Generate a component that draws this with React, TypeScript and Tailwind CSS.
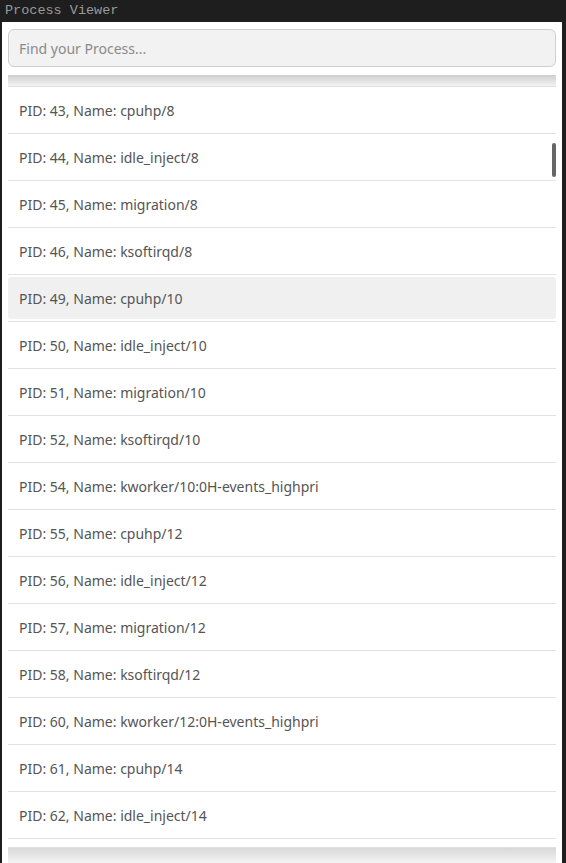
const processes = [
  { pid: 43, name: "cpuhp/8" },
  { pid: 44, name: "idle_inject/8" },
  { pid: 45, name: "migration/8" },
  { pid: 46, name: "ksoftirqd/8" },
  { pid: 49, name: "cpuhp/10" },
  { pid: 50, name: "idle_inject/10" },
  { pid: 51, name: "migration/10" },
  { pid: 52, name: "ksoftirqd/10" },
  { pid: 54, name: "kworker/10:0H-events_highpri" },
  { pid: 55, name: "cpuhp/12" },
  { pid: 56, name: "idle_inject/12" },
  { pid: 57, name: "migration/12" },
  { pid: 58, name: "ksoftirqd/12" },
  { pid: 60, name: "kworker/12:0H-events_highpri" },
  { pid: 61, name: "cpuhp/14" },
  { pid: 62, name: "idle_inject/14" },
];

export default function App() {
  return (
    <div className="h-[863px] w-[566px] overflow-hidden bg-[#1e1e1e] flex flex-col">
      {/* title bar */}
      <div className="h-[22px] shrink-0 flex items-center px-[5px] font-['Liberation_Mono',monospace] text-[13.5px] leading-none text-[#9a9a9a]">
        Process Viewer
      </div>

      <div className="relative flex-1 ml-[2px] mr-[4px] bg-white flex flex-col font-['Noto_Sans',sans-serif]">
        {/* search */}
        <div className="px-[6px] pt-[7px]">
          <div className="h-[38px] rounded-[6px] border border-[#cfcfcf] bg-[#f2f2f2] flex items-center px-[10px] text-[14px] text-[#8a8a8a]">
            Find your Process...
          </div>
        </div>

        {/* list */}
        <div className="mt-[8px] ml-[6px] mr-[6px] flex-1 flex flex-col">
          <div className="h-[12px] bg-gradient-to-b from-[#cfcfcf] to-[#f3f3f3] border-b border-[#dedede]" />
          {processes.map((p) => (
            <div key={p.pid} className="h-[47px] border-b border-[#e2e2e2] py-[2px]">
              <div
                className={
                  p.pid === 49
                    ? "h-full rounded-[3px] bg-[#f0f0f0] flex items-center pt-[1px] px-[11px] text-[14px] text-[#555555]"
                    : "h-full flex items-center pt-[1px] px-[11px] text-[14px] text-[#555555]"
                }
              >
                PID: {p.pid}, Name: {p.name}
              </div>
            </div>
          ))}
          <div className="mt-[8px] h-[16px] bg-gradient-to-b from-[#d8d8d8] to-[#f4f4f4] border-t border-[#e0e0e0]" />
        </div>

        {/* scrollbar thumb */}
        <div className="absolute right-[6px] top-[121px] h-[34px] w-[4px] rounded-full bg-[#666666]" />
      </div>
    </div>
  );
}
